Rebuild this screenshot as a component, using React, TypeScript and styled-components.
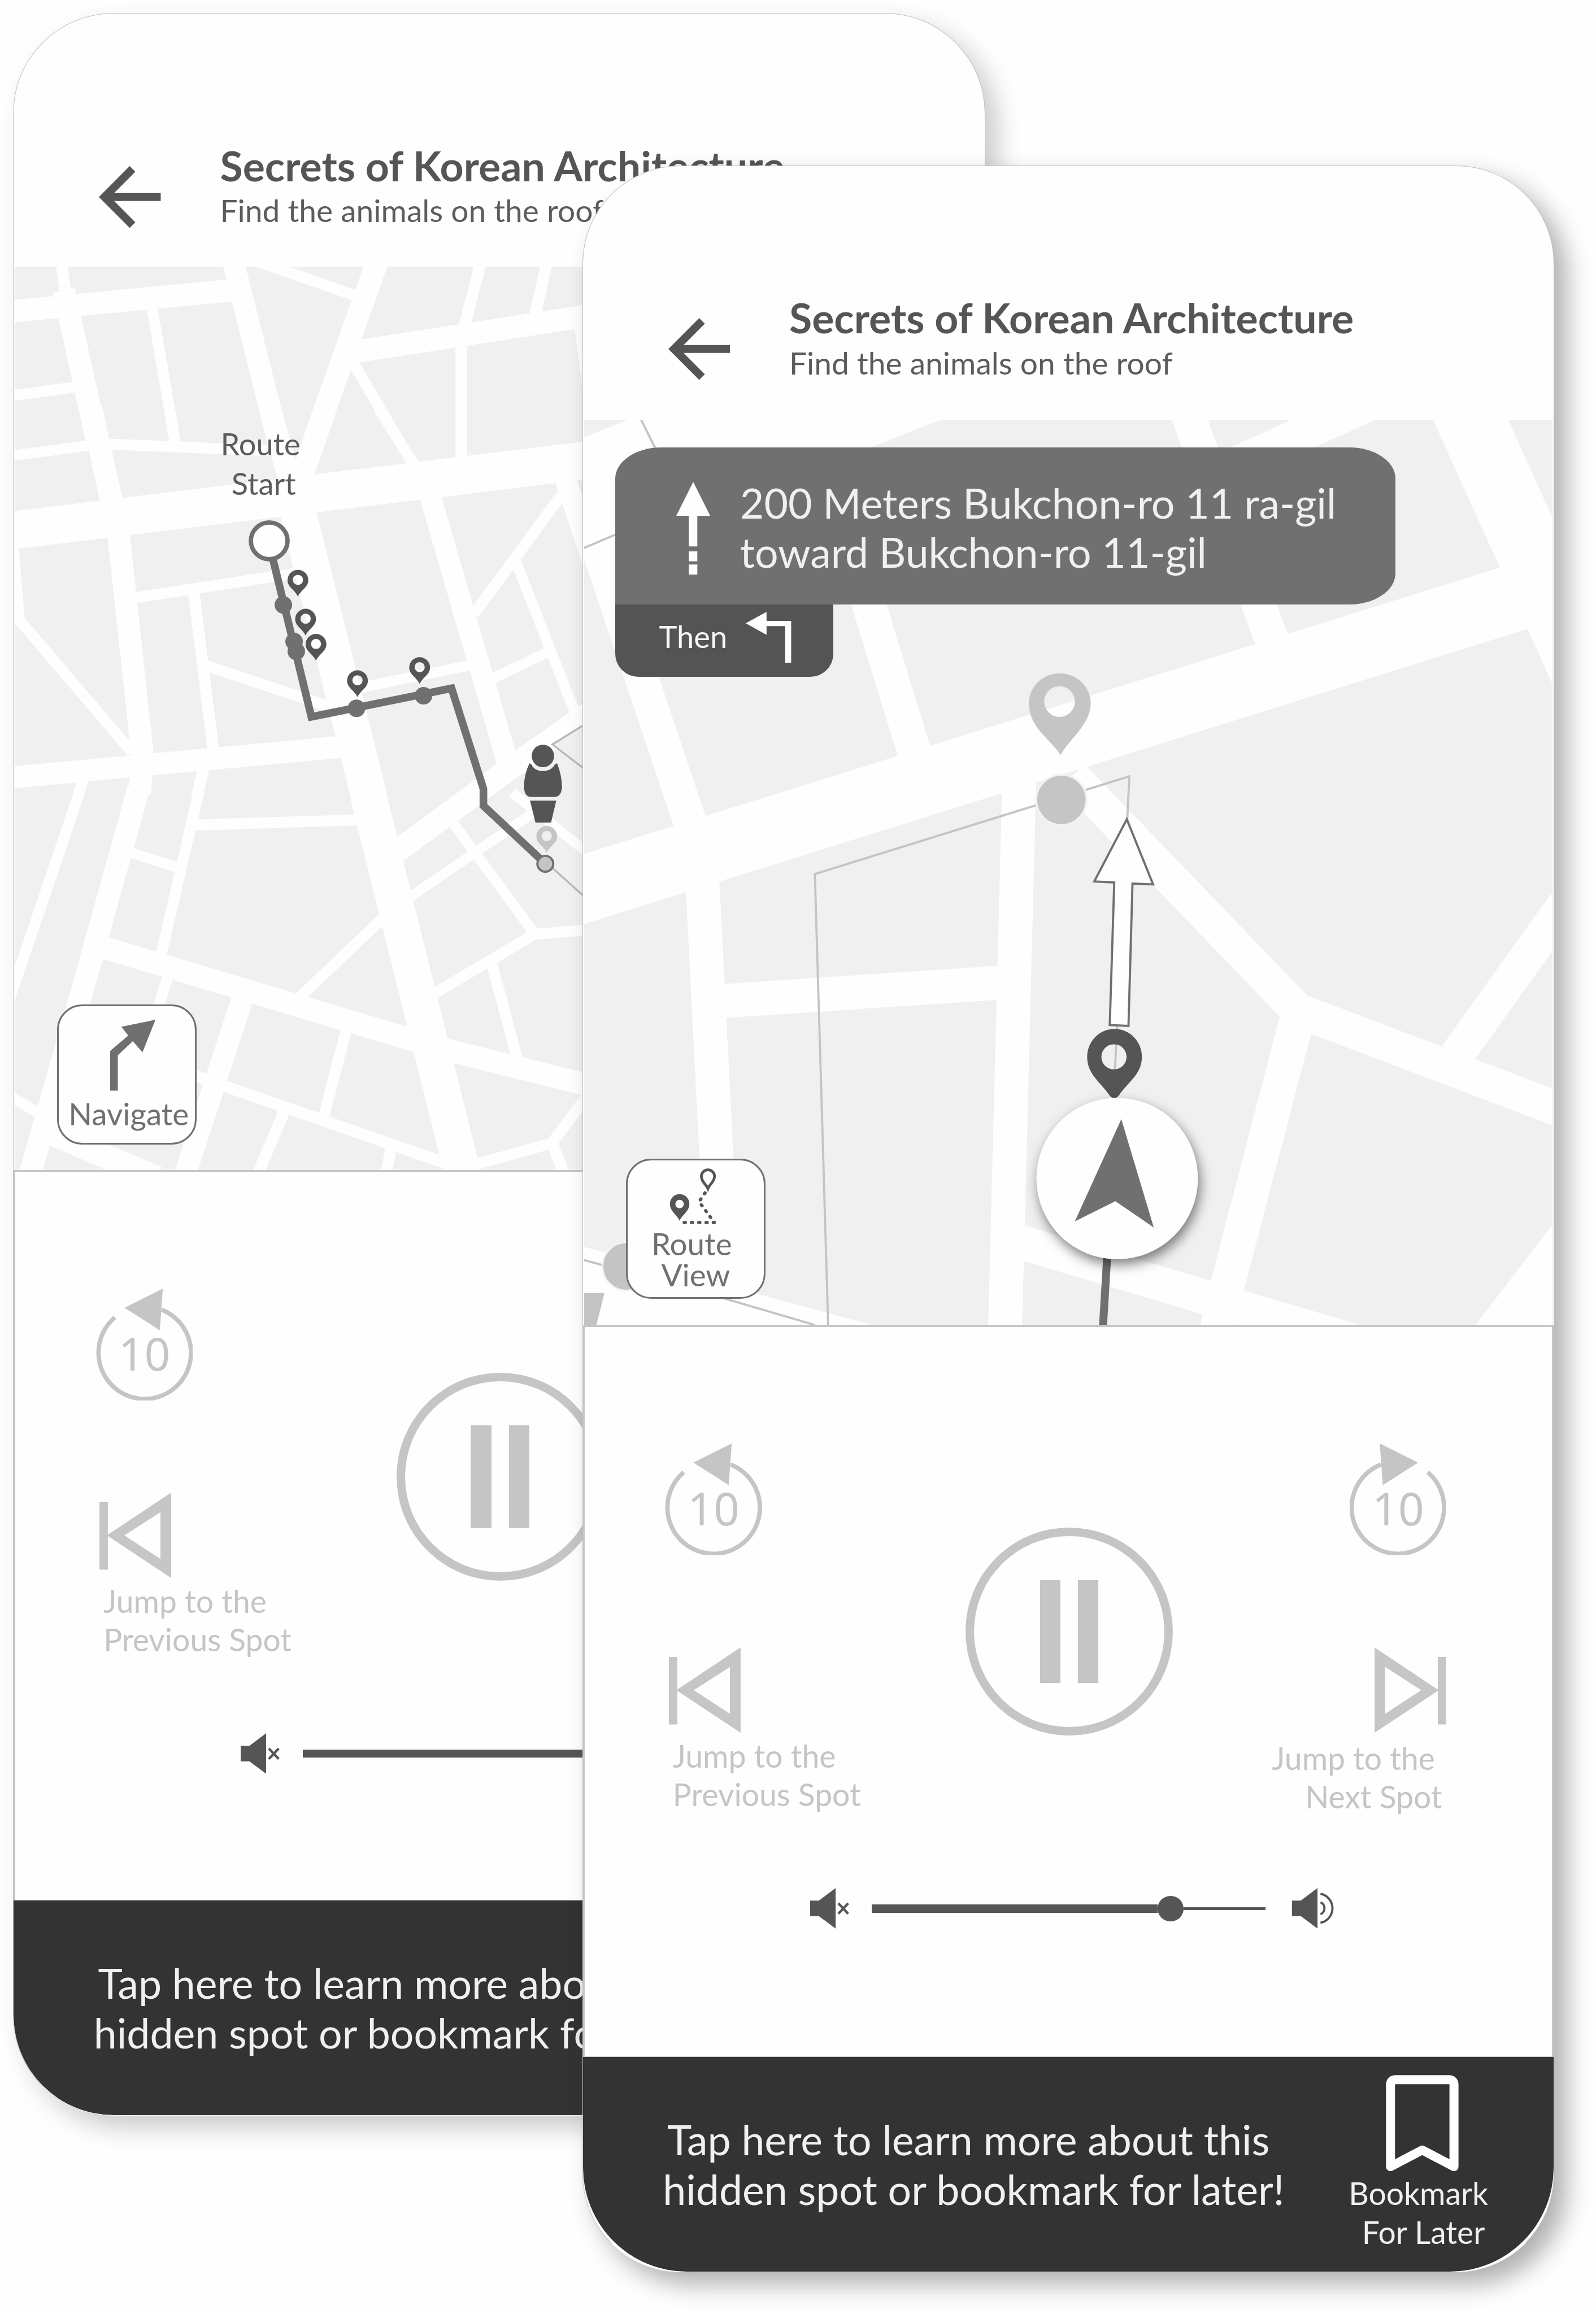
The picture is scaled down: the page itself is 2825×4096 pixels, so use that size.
import React from "react";
import styled, { createGlobalStyle } from "styled-components";

const color = {
  ink: "#555555",
  inkSoft: "#5c5c5c",
  mid: "#707070",
  light: "#c6c5c5",
  rule: "#c6c6c6",
  block: "#f0f0f0",
  road: "#fefefe",
  dark: "#333333",
  onDark: "#f0f0f0",
};

const Global = createGlobalStyle`
  html, body { margin: 0; padding: 0; background: #fefefe; overflow: hidden; }
  * { box-sizing: border-box; }
`;

const Board = styled.main`
  zoom: 0.96879;
  width: 2916px;
  height: 4228px;
  overflow: hidden;
  display: grid;
  align-items: start;
  justify-items: start;
  background: #fefefe;
  font-family: Lato, "Open Sans", sans-serif;
  color: ${color.ink};
`;

const Phone = styled.article<{ $x: number; $y: number; $shade: number; $radius: number }>`
  grid-area: 1 / 1;
  isolation: isolate;
  margin: ${(p) => p.$y}px 0 0 ${(p) => p.$x}px;
  width: 1776px;
  display: flex;
  flex-direction: column;
  overflow: hidden;
  background: #fefefe;
  border: 2px solid #c0c0c0;
  border-bottom-color: #f0f0f0;
  border-radius: ${(p) => p.$radius}px;
  box-shadow: 22px 22px 45px rgba(0, 0, 0, ${(p) => p.$shade});
`;

const Header = styled.header<{ $h: number }>`
  height: ${(p) => p.$h}px;
  padding: 236px 0 0 156px;
  display: flex;
  align-items: flex-start;
  gap: 108px;
`;

const BackIcon = styled.svg`
  margin-top: 42px;
  flex: none;
`;

const Title = styled.h1`
  margin: 0;
  font-size: 75.8px;
  line-height: 84px;
  font-weight: 700;
  white-space: nowrap;
`;

const Subtitle = styled.p`
  margin: 0;
  font-size: 56.9px;
  line-height: 80px;
  color: ${color.inkSoft};
  white-space: nowrap;
`;

const MapPanel = styled.section<{ $h: number }>`
  position: relative;
  height: ${(p) => p.$h}px;
  margin: 0 2px;
  overflow: hidden;
  background: ${color.block};
`;

const MapSvg = styled.svg`
  display: block;
`;

const MapLabel = styled.div<{ $x: number; $y: number }>`
  position: absolute;
  left: ${(p) => p.$x}px;
  top: ${(p) => p.$y}px;
  font-size: 56px;
  line-height: 72px;
  color: ${color.inkSoft};
`;

const Line = styled.span<{ $left?: number; $right?: number }>`
  display: block;
  white-space: nowrap;
  padding-left: ${(p) => p.$left ?? 0}px;
  padding-right: ${(p) => p.$right ?? 0}px;
`;

const ModeButton = styled.button<{ $x: number; $y: number }>`
  position: absolute;
  left: ${(p) => p.$x}px;
  top: ${(p) => p.$y}px;
  width: 255px;
  height: 256px;
  padding: 0;
  display: flex;
  flex-direction: column;
  align-items: flex-start;
  background: #fefefe;
  border: 4px solid ${color.mid};
  border-radius: 46px;
  font: inherit;
  font-size: 56.6px;
  line-height: 56.6px;
  color: ${color.mid};
  text-align: left;
`;

const ModeIcon = styled.svg<{ $x: number; $y: number }>`
  flex: none;
  margin: ${(p) => p.$y}px 0 0 ${(p) => p.$x}px;
`;

const ModeText = styled.span<{ $x: number; $gap: number }>`
  margin: ${(p) => p.$gap}px 0 0 ${(p) => p.$x}px;
`;

const Directions = styled.div`
  position: absolute;
  left: 57px;
  top: 51px;
`;

const Banner = styled.div`
  width: 1426px;
  height: 286px;
  padding: 62px 0 0 112px;
  display: flex;
  align-items: flex-start;
  gap: 54px;
  background: ${color.mid};
  border-radius: 84px 84px 84px 0 / 57px 57px 57px 0;
  color: ${color.onDark};
  font-size: 75.8px;
  line-height: 90px;
`;

const BannerText = styled.div`
  margin-top: -6px;
`;

const ThenTag = styled.div`
  width: 399px;
  height: 133px;
  padding: 14px 0 0 80px;
  display: flex;
  gap: 34px;
  background: #545454;
  border-radius: 0 0 42px 42px;
  color: #f6f6f6;
  font-size: 56px;
  line-height: 90px;
`;

const Player = styled.section<{ $h: number }>`
  height: ${(p) => p.$h}px;
  border: 4px solid ${color.rule};
  border-width: 5px 4px 2px;
  display: flex;
  flex-direction: column;
`;

const Controls = styled.div`
  height: 1024px;
  padding: 212px 193px 0 147px;
  display: grid;
  grid-template-columns: 549px 379px 1fr;
  align-items: start;
`;

const Side = styled.div<{ $end?: boolean }>`
  display: flex;
  flex-direction: column;
  align-items: ${(p) => (p.$end ? "flex-end" : "flex-start")};
`;

const Ghost = styled.button`
  position: relative;
  padding: 0;
  border: 0;
  background: none;
  display: grid;
  font: inherit;
`;

const Seconds = styled.span`
  position: absolute;
  inset: 60px 0 0 0;
  text-align: center;
  font-family: "Noto Sans", sans-serif;
  font-size: 83px;
  line-height: 116px;
  color: ${color.light};
`;

const Jump = styled.div<{ $end?: boolean }>`
  display: flex;
  flex-direction: column;
  align-items: ${(p) => (p.$end ? "flex-end" : "flex-start")};
  margin: 168px 0 0 ${(p) => (p.$end ? 0 : 7)}px;
`;

const JumpLabel = styled.div<{ $end?: boolean }>`
  margin: ${(p) => (p.$end ? "11px 8px 0 0" : "7px 0 0 7px")};
  text-align: ${(p) => (p.$end ? "right" : "left")};
  font-size: 57px;
  line-height: 70.5px;
  color: ${color.light};
`;

const PauseButton = styled.button`
  margin-top: 154px;
  width: 379px;
  height: 380px;
  padding: 0;
  display: flex;
  align-items: center;
  justify-content: center;
  gap: 32px;
  background: none;
  border: 16px solid ${color.light};
  border-radius: 50%;
`;

const PauseBar = styled.span`
  width: 37.5px;
  height: 188px;
  background: ${color.light};
`;

const Volume = styled.div`
  height: 76px;
  padding-left: 412px;
  display: flex;
  align-items: center;
`;

const Track = styled.div`
  width: 719px;
  margin: 0 49px 0 42px;
  display: flex;
  align-items: center;
`;

const TrackFill = styled.span`
  width: 522px;
  height: 15px;
  background: ${color.ink};
`;

const TrackThumb = styled.span`
  width: 47px;
  height: 47px;
  border-radius: 50%;
  background: ${color.ink};
`;

const TrackRest = styled.span`
  flex: 1;
  height: 5px;
  background: ${color.ink};
`;

const Footer = styled.footer<{ $h: number; $round: number }>`
  height: ${(p) => p.$h}px;
  padding: 0 120px 0 146px;
  display: flex;
  justify-content: space-between;
  align-items: flex-start;
  background: ${color.dark};
  color: ${color.onDark};
  border-radius: 0 0 ${(p) => p.$round}px ${(p) => p.$round}px;
`;

const FooterText = styled.p`
  margin: 107px 0 0;
  font-size: 75.8px;
  line-height: 90px;
`;

const Bookmark = styled.div`
  margin-top: 33px;
  display: flex;
  flex-direction: column;
  align-items: center;
  text-align: right;
  font-size: 57px;
  line-height: 70.8px;
`;

const BookmarkIcon = styled.svg`
  margin: 0 0 5px 15px;
`;

/* ---------- map drawing ---------- */

type Road = [width: number, ...points: number[]];

interface Sheet {
  x: number;
  y: number;
  sx: number;
  sy: number;
  roads: Road[];
}

const toPoints = (s: Sheet, flat: number[]) => {
  const out: string[] = [];
  for (let i = 0; i < flat.length; i += 2) {
    out.push(`${(s.x + flat[i] * s.sx).toFixed(1)},${(s.y + flat[i + 1] * s.sy).toFixed(1)}`);
  }
  return out.join(" ");
};

const Roads = ({ sheets }: { sheets: Sheet[] }) => (
  <g fill="none" stroke={color.road} strokeLinejoin="miter">
    {sheets.map((s, i) =>
      s.roads.map(([w, ...pts], j) => (
        <polyline key={`${i}-${j}`} points={toPoints(s, pts)} strokeWidth={w} />
      ))
    )}
  </g>
);

const overviewSheets: Sheet[] = [
  {
    x: 0, y: 0, sx: 0.7015, sy: 0.5102,
    roads: [
      [21, 161, 945, 173, 1060],
      [41, 20, 1116, 615, 1038],
      [41, 167, 1040, 252, 1568],
      [20, 395, 1085, 455, 1568],
      [20, 20, 1419, 200, 1385],
      [40, 607, 930, 723, 1568],
      [20, 660, 930, 925, 1058],
      [41, 985, 930, 821, 1568],
      [41, 915, 1261, 1530, 1131],
      [21, 1255, 930, 1211, 1165],
      [21, 1427, 930, 1395, 1125],
      [20, 918, 1292, 1036, 1568],
      [15, 1508, 1170, 1530, 1400],
    ],
  },
  {
    x: 0, y: 750, sx: 0.7015, sy: 0.4783,
    roads: [
      [69, 20, 460, 1540, 188],
      [41, 238, -10, 295, 370],
      [41, 308, 450, 373, 1330, 365, 1463],
      [20, 443, 0, 457, 125],
      [19, 20, 175, 240, 132],
      [20, 265, 127, 730, 155],
      [41, 704, -10, 755, 270],
      [41, 847, 0, 785, 260],
      [20, 987, -10, 1080, 210],
      [21, 1202, -260, 1202, 195],
      [20, 36, 500, 36, 528, 51, 800, 345, 1305],
      [20, 330, 720, 790, 617],
      [21, 505, 690, 556, 1290],
      [20, 525, 968, 865, 1134],
      [40, 20, 1403, 900, 1283],
      [20, 220, 1390, 205, 1470],
      [21, 532, 1360, 513, 1480],
      [66, 772, 360, 963, 1480],
      [39, 1120, 320, 1324, 1350],
      [20, 1462, 325, 1235, 777],
      [39, 1474, 262, 1562, 655],
      [19, 1343, 572, 1499, 1155],
      [19, 1270, 1033, 1428, 923],
      [19, 910, 1067, 1228, 972],
      [42, 1015, 1705, 1337, 1358, 1545, 1145],
    ],
  },
  {
    x: 0, y: 1450, sx: 0.7015, sy: 0.4783,
    roads: [
      [41, 362, -20, 206, 800, 80, 1450],
      [20, 209, -10, 22, 800],
      [20, 519, -10, 420, 620],
      [20, 440, 690, 413, 815],
      [20, 503, 120, 938, 100],
      [19, 335, 222, 466, 283],
      [41, 235, 572, 1110, 956, 1185, 986, 1540, 1116],
      [20, 782, 777, 1000, 472],
      [66, 959, 0, 1206, 1450],
      [40, 634, 775, 484, 1450],
      [20, 903, 900, 845, 1230],
      [21, 500, 1073, 1170, 1416],
      [21, 745, 1200, 673, 1450],
      [21, 1020, 1350, 1007, 1450],
      [20, 20, 1152, 115, 1229],
      [44, 90, 1270, 410, 1468],
      [20, 1225, 1422, 1438, 1335, 1535, 1145],
      [21, 1438, 1330, 1469, 1450],
      [19, 1170, 90, 1392, 532],
      [18, 1062, 402, 1415, 47],
      [18, 1335, -5, 1535, 230],
      [20, 1535, 520, 1393, 537, 1130, 765],
      [20, 1282, 650, 1348, 1010],
    ],
  },
];

const naviSheets: Sheet[] = [
  {
    x: 0, y: 0, sx: 1, sy: 1,
    roads: [
      [122, 1050, 1630, 2860, 1064],
      [125, 2670, 727, 2914, 1267],
      [61, 1090, 990, 1265, 1512],
      [62, 1575, 1060, 1682, 1408],
      [62, 2160, 727, 2350, 1237],
      [63, 2520, 730, 2240, 856],
      [62, 1864, 1400, 1837.5, 2431],
      [62, 1284, 1600, 1312, 2150],
      [62, 1310, 1830, 1835, 1795],
      [63, 1960, 1418, 2372, 1846, 2860, 2031],
      [63, 2374, 1850, 2246, 2340, 2224, 2431],
      [63, 2662, 1929, 2860, 1652],
      [63, 1850, 2265, 2500, 2458],
    ],
  },
];

const pinPath =
  "M0 0C-5 -12 -19 -17 -19 -30A19 19 0 1 1 19 -30C19 -17 5 -12 0 0ZM0 -40A9.3 9.3 0 1 0 0 -21.4A9.3 9.3 0 1 0 0 -40Z";

/* Small teardrop marker whose tip sits at (x, y). */
const Pin = ({ x, y, fill = color.ink }: { x: number; y: number; fill?: string }) => (
  <path transform={`translate(${x} ${y})`} fill={fill} fillRule="evenodd" d={pinPath} />
);

const OverviewMap = () => (
  <MapSvg width={1768} height={1651} viewBox="27.5 487 1768 1651">
    <Roads sheets={overviewSheets} />
    <g fill="none" stroke="#b8b8b8" strokeWidth={3.5}>
      <path fill={color.block} d="M1066 1325L1010 1360L1066 1403" />
      <path d="M1008 1584L1066 1636" />
    </g>
    <polyline
      points="499,1020 569.6,1309.6 825.7,1257.5 883.9,1441 883.9,1472 994,1575"
      fill="none" stroke={color.mid} strokeWidth={14}
    />
    <circle cx={492.5} cy={988} r={33.5} fill="#fefefe" stroke={color.mid} strokeWidth={8} />
    <g fill={color.mid}>
      <circle cx={518.4} cy={1105} r={16} />
      <circle cx={538} cy={1172} r={16} />
      <circle cx={542} cy={1190} r={16} />
      <circle cx={652} cy={1294} r={16} />
      <circle cx={774.5} cy={1271} r={16} />
    </g>
    <Pin x={545} y={1090} />
    <Pin x={559} y={1161} />
    <Pin x={578} y={1207} />
    <Pin x={653.8} y={1273.5} />
    <Pin x={767.4} y={1249.5} />
    <g fill={color.ink}>
      <circle cx={992.6} cy={1381} r={20.5} />
      <path d="M968 1394.500Q958 1415 958 1438Q959 1456 971 1456H1014Q1026 1456 1027.500 1438Q1027 1415 1018.500 1394.500L1015 1395.500Q1008 1408.500 992.600 1408.500Q977 1408.500 971 1395.500Z" />
      <path d="M969 1462.700H1017L1007.500 1502.600H979Z" />
    </g>
    <Pin x={999.6} y={1558} fill={color.light} />
    <circle cx={997} cy={1578} r={14.5} fill="#c4c4c4" stroke={color.mid} strokeWidth={4} />
  </MapSvg>
);

const NaviMap = () => (
  <MapSvg width={1768} height={1654} viewBox="1068.5 767 1768 1654">
    <Roads sheets={naviSheets} />
    <g fill={color.road}>
      <path d="M1060 802L1149 767H1720L1060 1028Z" />
      <path d="M1060 2276L1398 2368L1595 2421H1060Z" />
      <path d="M2845 2228L2697 2421H2845Z" />
    </g>
    <path d="M1066 2362.500H1105.500L1091 2421H1066Z" fill="#c4c3c3" />
    <g fill="none" stroke="#c4c4c4" strokeWidth={4}>
      <path d="M1172.500 767L1200 822" />
      <path d="M1064 1003L1130 975" />
      <path d="M1066 2301.700L1330 2374L1490 2421" />
      <path d="M1514.300 2421L1490 1597L2064.600 1418.400L2038 1960" />
    </g>
    <circle cx={1146} cy={2314} r={44} fill="#c4c4c4" stroke="#f3f3f3" strokeWidth={3} />
    <circle cx={1940.4} cy={1461.5} r={46} fill="#c5c5c5" stroke="#f3f3f3" strokeWidth={3.5} />
    <path
      fill={color.light} fillRule="evenodd"
      d="M1939 1380C1924 1353 1881 1331 1881 1285A56.500 54.500 0 0 1 1994 1285C1994 1324 1953 1352 1939 1380ZM1937 1254A28 28 0 1 0 1937 1310A28 28 0 1 0 1937 1254Z"
    />
    <path
      fill="#fefefe" stroke="#707070" strokeWidth={4}
      d="M2060 1497L2108 1616L2070.300 1614.500L2063 1874.500L2028.800 1873L2037 1612.500L2000.500 1610.500Z"
    />
    <path d="M2024.400 2290L2016.500 2423" stroke={color.mid} strokeWidth={14.5} />
    <path
      fill={color.ink} fillRule="evenodd"
      d="M2046 2001Q2037 2012 2028 2001C2012 1977 1987.500 1963 1987.500 1931A50 51 0 0 1 2087.500 1931C2087.500 1963 2062 1977 2046 2001ZM2036.500 1908A23 23 0 1 0 2036.500 1954A23 23 0 1 0 2036.500 1908Z"
    />
    <circle
      cx={2042.3} cy={2153.4} r={147.6} fill="#fefefe"
      style={{ filter: "drop-shadow(4px 10px 11px rgba(0,0,0,0.5))" }}
    />
    <path d="M2049.900 2045L2109.200 2242.700L2039 2194.900L1965 2231.600Z" fill={color.mid} />
  </MapSvg>
);

/* ---------- icons ---------- */

const Back = () => (
  <BackIcon width={113} height={113} viewBox="0 0 113 113" fill="none" stroke={color.ink} strokeWidth={14.6}>
    <path d="M61.500 5.200L10.300 56.500L61.500 107.800M10.300 56.500H113" />
  </BackIcon>
);

const Skip10 = ({ forward }: { forward?: boolean }) => (
  <Ghost aria-label={forward ? "Forward ten seconds" : "Back ten seconds"}>
    <svg width={177} height={205} viewBox="0 0 177 205">
      <g transform={forward ? "translate(177 0) scale(-1 1)" : undefined}>
        <path d="M120 38.500A84.500 84.500 0 1 1 34.500 52.500" fill="none" stroke={color.light} strokeWidth={8} />
        <path d="M52 35L122 0L116.500 76Z" fill={color.light} />
      </g>
    </svg>
    <Seconds>10</Seconds>
  </Ghost>
);

const JumpIcon = ({ forward }: { forward?: boolean }) => (
  <svg width={131} height={156} viewBox="0 0 131 156">
    <g transform={forward ? "translate(131 0) scale(-1 1)" : undefined} fill="#c6c6c6">
      <path d="M0 17.600H15.400V141H0Z" />
      <path fillRule="evenodd" d="M13.500 78.300L131 0V156ZM45.600 78.300L111.500 121.400V35.800Z" />
    </g>
  </svg>
);

const Mute = () => (
  <svg width={71} height={76} viewBox="0 0 71 76">
    <path d="M0 24H16L46.500 1V75L16 52.500H0Z" fill={color.ink} />
    <path d="M51.500 29L69.500 48M69.500 29L51.500 48" stroke={color.ink} strokeWidth={4.5} />
  </svg>
);

const Loud = () => (
  <svg width={77} height={76} viewBox="0 0 77 76">
    <path d="M0 24H16L46.500 1V75L16 52.500H0Z" fill={color.ink} />
    <path d="M52 27A12 12 0 0 1 52 49M52 11.500A27 27 0 0 1 52 64.500" fill="none" stroke={color.ink} strokeWidth={4} />
  </svg>
);

const BookmarkShape = () => (
  <BookmarkIcon width={133} height={176} viewBox="0 0 133 176">
    <path
      d="M8.500 167.500V18Q8.500 8.500 18 8.500H115Q124.500 8.500 124.500 18V167.500L66.500 137Z"
      fill="none" stroke="#fefefe" strokeWidth={16.500} strokeLinejoin="round"
    />
  </BookmarkIcon>
);

const NavigateIcon = () => (
  <ModeIcon $x={94} $y={25} width={83} height={130} viewBox="202 1865 83 130">
    <path fill={color.mid} d="M202 1994.600V1922L235 1894L222.400 1878L284.800 1865L261 1924.500L243.400 1904.300L216 1930V1994.600Z" />
  </ModeIcon>
);

const RouteIcon = () => (
  <ModeIcon $x={76} $y={14} width={86} height={103} viewBox="1224 2135 86 103">
    <path
      fill={color.ink} fillRule="evenodd"
      d="M1242.500 2231C1239 2221 1224.800 2214 1224.800 2200A17.800 17.800 0 0 1 1260.400 2200C1260.400 2214 1246 2221 1242.500 2231ZM1242.500 2192.500A7.800 7.800 0 1 0 1242.500 2208.100A7.800 7.800 0 1 0 1242.500 2192.500Z"
    />
    <path
      d="M1294.300 2172C1291 2164 1282.300 2160 1282.300 2149.500A12 11.800 0 0 1 1306.300 2149.500C1306.300 2160 1297 2164 1294.300 2172Z"
      fill="none" stroke={color.ink} strokeWidth={5}
    />
    <path
      d="M1289 2180L1278 2196L1306 2234H1248"
      fill="none" stroke={color.ink} strokeWidth={6} strokeLinecap="round" strokeLinejoin="round" strokeDasharray="2 11.3"
    />
  </ModeIcon>
);

const AheadIcon = () => (
  <svg width={62} height={170} viewBox="0 0 62 170" fill="#fefefe">
    <path d="M31 0L62 62H38.500V118H23V62H0ZM23 127H38.500V145H23ZM23 151H38.500V170H23Z" />
  </svg>
);

const LeftIcon = () => (
  <svg width={83} height={93} viewBox="0 0 83 93" fill="#fefefe">
    <path d="M0 21L38 0V16.500H83V93H72V26H38V42Z" />
  </svg>
);

/* ---------- screen sections ---------- */

const TopBar = ({ height }: { height: number }) => (
  <Header $h={height}>
    <Back />
    <div>
      <Title>Secrets of Korean Architecture</Title>
      <Subtitle>Find the animals on the roof</Subtitle>
    </div>
  </Header>
);

const PlayerPanel = ({ height }: { height: number }) => (
  <Player $h={height}>
    <Controls>
      <Side>
        <Skip10 />
        <Jump>
          <JumpIcon />
          <JumpLabel>
            <Line>Jump to the</Line>
            <Line>Previous Spot</Line>
          </JumpLabel>
        </Jump>
      </Side>
      <PauseButton aria-label="Pause">
        <PauseBar />
        <PauseBar />
      </PauseButton>
      <Side $end>
        <Skip10 forward />
        <Jump $end>
          <JumpIcon forward />
          <JumpLabel $end>
            <Line $right={13}>Jump to the</Line>
            <Line>Next Spot</Line>
          </JumpLabel>
        </Jump>
      </Side>
    </Controls>
    <Volume>
      <Mute />
      <Track>
        <TrackFill />
        <TrackThumb />
        <TrackRest />
      </Track>
      <Loud />
    </Volume>
  </Player>
);

const LearnMore = ({ height, round }: { height: number; round: number }) => (
  <Footer $h={height} $round={round}>
    <FooterText>
      <Line $left={8}>Tap here to learn more about this</Line>
      <Line>hidden spot or bookmark for later!</Line>
    </FooterText>
    <Bookmark>
      <BookmarkShape />
      <div>
        <Line>Bookmark</Line>
        <Line $right={6}>For Later</Line>
      </div>
    </Bookmark>
  </Footer>
);

export default function App() {
  return (
    <>
      <Global />
      <Board>
        <Phone $x={24} $y={24} $shade={0.2} $radius={184}>
          <TopBar height={462} />
          <MapPanel $h={1651}>
            <OverviewMap />
            <MapLabel $x={376} $y={288}>
              <Line>Route</Line>
              <Line $left={20}>Start</Line>
            </MapLabel>
            <ModeButton $x={77} $y={1348}>
              <NavigateIcon />
              <ModeText $x={18} $gap={14}>
                <Line>Navigate</Line>
              </ModeText>
            </ModeButton>
          </MapPanel>
          <PlayerPanel height={1334} />
          <LearnMore height={393} round={182} />
        </Phone>
        <Phone $x={1064} $y={302} $shade={0.31} $radius={179}>
          <TopBar height={464} />
          <MapPanel $h={1654}>
            <NaviMap />
            <Directions>
              <Banner>
                <AheadIcon />
                <BannerText>
                  <Line>200 Meters Bukchon-ro 11 ra-gil</Line>
                  <Line>toward Bukchon-ro 11-gil</Line>
                </BannerText>
              </Banner>
              <ThenTag>
                <span>Then</span>
                <LeftIcon />
              </ThenTag>
            </Directions>
            <ModeButton $x={77} $y={1350}>
              <RouteIcon />
              <ModeText $x={43} $gap={7}>
                <Line>Route</Line>
                <Line $left={18}>View</Line>
              </ModeText>
            </ModeButton>
          </MapPanel>
          <PlayerPanel height={1337} />
          <LearnMore height={393} round={190} />
        </Phone>
      </Board>
    </>
  );
}
